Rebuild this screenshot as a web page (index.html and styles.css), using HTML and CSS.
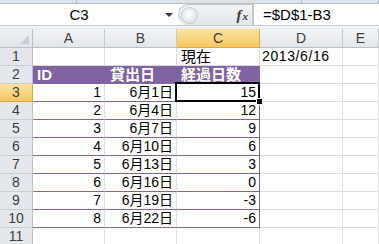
FILE: index.html
```html
<!DOCTYPE html>
<html>
<head>
<title>Book1 - Excel</title>
<link rel="stylesheet" href="styles.css">
</head>
<body>
<!-- ribbon edge -->
<div id="strip">
  <div class="strip-part"></div>
  <div class="strip-part wide"></div>
  <div class="strip-part"></div>
</div>

<!-- formula bar -->
<div id="formulaBar">
  <div id="nameBox">
    <span id="cellName">C3</span>
    <span id="nameArrow"></span>
  </div>
  <div id="fxArea">
    <span id="grip"></span>
    <span id="fx"><i>f</i><i class="sub">x</i></span>
  </div>
  <div id="formula">=$D$1-B3</div>
</div>
<div id="gap"></div>

<!-- sheet -->
<div id="sheet">
  <div class="corner"><span class="tri"></span></div>
  <div class="hd">A</div>
  <div class="hd">B</div>
  <div class="hd sel">C</div>
  <div class="hd">D</div>
  <div class="hd">E</div>

  <div class="rh">1</div>
  <div class="c"></div>
  <div class="c"></div>
  <div class="c jp">現在</div>
  <div class="c date">2013/6/16</div>
  <div class="c"></div>

  <div class="rh">2</div>
  <div class="c th">ID</div>
  <div class="c th th-b">貸出日</div>
  <div class="c th">経過日数</div>
  <div class="c"></div>
  <div class="c"></div>

  <div class="rh sel">3</div>
  <div class="c td num">1</div>
  <div class="c td num">6月1日</div>
  <div class="c td num edge active">15</div>
  <div class="c"></div>
  <div class="c"></div>

  <div class="rh">4</div>
  <div class="c td num">2</div>
  <div class="c td num">6月4日</div>
  <div class="c td num edge">12</div>
  <div class="c"></div>
  <div class="c"></div>

  <div class="rh">5</div>
  <div class="c td num">3</div>
  <div class="c td num">6月7日</div>
  <div class="c td num edge">9</div>
  <div class="c"></div>
  <div class="c"></div>

  <div class="rh">6</div>
  <div class="c td num">4</div>
  <div class="c td num">6月10日</div>
  <div class="c td num edge">6</div>
  <div class="c"></div>
  <div class="c"></div>

  <div class="rh">7</div>
  <div class="c td num">5</div>
  <div class="c td num">6月13日</div>
  <div class="c td num edge">3</div>
  <div class="c"></div>
  <div class="c"></div>

  <div class="rh">8</div>
  <div class="c td num">6</div>
  <div class="c td num">6月16日</div>
  <div class="c td num edge">0</div>
  <div class="c"></div>
  <div class="c"></div>

  <div class="rh">9</div>
  <div class="c td num">7</div>
  <div class="c td num">6月19日</div>
  <div class="c td num edge">-3</div>
  <div class="c"></div>
  <div class="c"></div>

  <div class="rh">10</div>
  <div class="c td num">8</div>
  <div class="c td num">6月22日</div>
  <div class="c td num edge">-6</div>
  <div class="c"></div>
  <div class="c"></div>

  <div class="rh">11</div>
  <div class="c"></div>
  <div class="c"></div>
  <div class="c"></div>
  <div class="c"></div>
  <div class="c"></div>
</div>
</body>
</html>
```

FILE: styles.css
```css
body {
margin: 0;
width: 379px;
height: 244px;
overflow: hidden;
background: white;
font-family: "Liberation Sans", "Noto Sans CJK JP", sans-serif;
color: black;
cursor: default;
}
#strip {
display: flex;
height: 3px;
background: #dde2e8;
border-bottom: 1px solid #b9bfc7;
}
.strip-part {
width: 86px;
border-right: 1px solid #b9bfc7;
}
.strip-part.wide {
width: 252px;
}
#formulaBar {
display: flex;
height: 22px;
box-sizing: border-box;
border-bottom: 1px solid #c3c8cf;
}
#nameBox {
width: 178px;
display: flex;
align-items: center;
background: white;
}
#cellName {
width: 158px;
text-align: center;
font-size: 15px;
}
#nameArrow {
margin-left: 7px;
width: 0;
height: 0;
border-left: 4px solid transparent;
border-right: 4px solid transparent;
border-top: 4px solid #3c3c3c;
}
#fxArea {
width: 75px;
display: flex;
align-items: center;
justify-content: space-between;
background: linear-gradient(#f1f3f5, #e2e6eb);
border: 1px solid #c3c8cf;
border-bottom: none;
border-radius: 11px 0 0 11px;
box-sizing: border-box;
}
#grip {
width: 15px;
height: 15px;
margin-left: 2px;
border-radius: 50%;
background: radial-gradient(circle at 45% 40%, #ffffff, #dfe3e8 70%, #c9ced5);
border: 1px solid #c7ccd3;
}
#fx {
margin-right: 4px;
font-family: "Liberation Serif", serif;
font-size: 15px;
font-weight: bold;
color: #3a3a3a;
}
#fx .sub {
font-size: 11px;
margin-left: 1px;
}
#formula {
flex: 1;
padding-left: 9px;
line-height: 21px;
font-size: 15px;
border-left: 1px solid #c3c8cf;
}
#gap {
height: 3px;
background: linear-gradient(#fbfbfc, #e6e9ed);
}
#sheet {
display: grid;
grid-template-columns: 33px 72px 72px 83px 83px 1fr;
grid-template-rows: 19px repeat(11, 18px);
}
.corner, .hd, .rh, .c {
box-sizing: border-box;
white-space: nowrap;
}
.corner {
position: relative;
background: linear-gradient(#eef0f3, #e1e5ea);
border-right: 1px solid #b9bfc7;
border-bottom: 1px solid #b9bfc7;
}
.tri {
position: absolute;
right: 3px;
bottom: 3px;
width: 0;
height: 0;
border-left: 9px solid transparent;
border-bottom: 9px solid #c9ced5;
}
.hd {
background: linear-gradient(#f3f4f6, #e3e6ea);
border-right: 1px solid #c5cad1;
border-bottom: 1px solid #b9bfc7;
text-align: center;
font-size: 14px;
line-height: 18px;
color: #3e3e3e;
}
.rh {
background: #e4e8ed;
border-right: 1px solid #b9bfc7;
border-bottom: 1px solid #c9ced5;
text-align: center;
font-size: 14px;
line-height: 17px;
color: #3e3e3e;
}
.sel {
background: linear-gradient(#fbe3a0, #f5c860);
border-right-color: #d9a948;
border-bottom-color: #d9a948;
}
.c {
border-right: 1px solid #dadcdd;
border-bottom: 1px solid #dadcdd;
padding: 0 3px 0 4px;
font-size: 14px;
line-height: 17px;
}
.jp {
font-size: 15px;
}
.date {
padding-left: 2px;
font-size: 14px;
letter-spacing: 0.6px;
}
.th {
background: #8064a2;
border-right-color: #8064a2;
border-bottom-color: #8064a2;
color: white;
font-weight: bold;
font-size: 15px;
}
.th-b {
padding-left: 5px;
}
.td {
border-bottom-color: #8064a2;
}
.num {
text-align: right;
}
.edge {
border-right-color: #8064a2;
}
.active {
position: relative;
}
.active::after {
content: "";
position: absolute;
top: -2px;
left: -2px;
right: -1px;
bottom: -1px;
border: 2px solid black;
}
.active::before {
content: "";
position: absolute;
right: -4px;
bottom: -4px;
width: 5px;
height: 5px;
background: black;
border: 1px solid white;
z-index: 1;
}
```
